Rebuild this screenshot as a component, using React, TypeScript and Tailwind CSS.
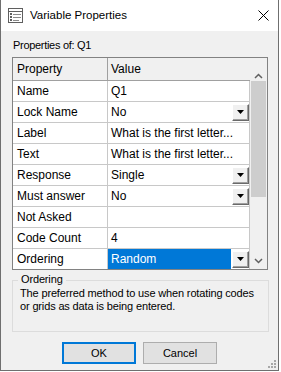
import React from "react";

type Row = { p: string; v: string; dd?: boolean; sel?: boolean };

const rows: Row[] = [
  { p: "Name", v: "Q1" },
  { p: "Lock Name", v: "No", dd: true },
  { p: "Label", v: "What is the first letter..." },
  { p: "Text", v: "What is the first letter..." },
  { p: "Response", v: "Single", dd: true },
  { p: "Must answer", v: "No", dd: true },
  { p: "Not Asked", v: "" },
  { p: "Code Count", v: "4" },
  { p: "Ordering", v: "Random", dd: true, sel: true },
];

function DropButton() {
  return (
    <div className="w-[17px] h-[17px] shrink-0 bg-[#f0f0f0] border-t border-l border-t-white border-l-white border-r border-b border-r-[#696969] border-b-[#696969] shadow-[inset_-1px_-1px_0_#a0a0a0] flex items-center justify-center">
      <svg width="7" height="4" viewBox="0 0 7 4">
        <polygon points="0,0 7,0 3.5,4" fill="#000" />
      </svg>
    </div>
  );
}

function Chevron({ up }: { up?: boolean }) {
  return (
    <svg width="9" height="6" viewBox="0 0 9 6">
      <polyline
        points={up ? "1,5 4.5,1.5 8,5" : "1,1 4.5,4.5 8,1"}
        fill="none"
        stroke="#606060"
        strokeWidth="1.5"
      />
    </svg>
  );
}

export default function App() {
  return (
    <div className="w-[281px] h-[372px] bg-white">
      <div className="relative flex h-[371px] w-[279px] flex-col border-x border-b border-[#6f6f6f] bg-[#f0f0f0] font-['Liberation_Sans',Arial,sans-serif] text-black">
        {/* Title bar */}
        <div className="flex h-[31px] shrink-0 items-center bg-white">
          <svg className="ml-[7px] shrink-0" width="15" height="15" viewBox="0 0 15 15">
            <rect x="0.5" y="0.5" width="14" height="14" fill="#fff" stroke="#5f5f5f" />
            <line x1="0.5" y1="3.5" x2="14.5" y2="3.5" stroke="#5f5f5f" />
            <rect x="2" y="5" width="2" height="2" fill="#5f5f5f" />
            <rect x="2" y="8" width="2" height="2" fill="#5f5f5f" />
            <rect x="2" y="11" width="2" height="2" fill="#5f5f5f" />
            <line x1="5" y1="6.5" x2="13" y2="6.5" stroke="#8a8a8a" />
            <line x1="5" y1="9.5" x2="13" y2="9.5" stroke="#8a8a8a" />
            <line x1="5" y1="12.5" x2="11" y2="12.5" stroke="#8a8a8a" />
          </svg>
          <span className="ml-[7px] text-[11.5px] leading-[15px]">Variable Properties</span>
          <svg className="ml-auto mr-[9px] shrink-0" width="11" height="11" viewBox="0 0 11 11">
            <line x1="0.5" y1="0.5" x2="10.5" y2="10.5" stroke="#000" strokeWidth="1" />
            <line x1="10.5" y1="0.5" x2="0.5" y2="10.5" stroke="#000" strokeWidth="1" />
          </svg>
        </div>

        {/* Body */}
        <div className="flex flex-col pl-[11px]">
          <div className="h-[26px] pl-[1px] pt-[7px] text-[11px] leading-[15px] tracking-[-0.3px]">
            Properties of: Q1
          </div>

          {/* Property grid */}
          <div className="flex h-[213px] w-[256px] overflow-hidden border border-[#828282] bg-white">
            <div className="flex w-[237px] flex-col text-[12px]">
              <div className="flex h-[23px] shrink-0 border-b border-[#a0a0a0] bg-[#f0f0f0]">
                <div className="flex w-[95px] items-center border-r border-[#a0a0a0] pl-[4px]">Property</div>
                <div className="flex w-[142px] items-center pl-[3px]">Value</div>
              </div>
              {rows.map((r) => (
                <div key={r.p} className="flex h-[21px] shrink-0 border-b border-[#c8c8c8]">
                  <div className="flex w-[95px] items-center border-r border-[#c8c8c8] pl-[4px]">{r.p}</div>
                  <div className="flex w-[142px] items-center border-r border-[#c8c8c8]">
                    {r.sel ? (
                      <div className="flex h-full w-[123px] items-center bg-[#0078d7] pl-[3px] text-white">{r.v}</div>
                    ) : r.dd ? (
                      <div className="w-[123px] whitespace-nowrap pl-[3px]">{r.v}</div>
                    ) : (
                      <div className="flex-1 whitespace-nowrap pl-[3px]">{r.v}</div>
                    )}
                    {r.dd ? (
                      <div className="ml-[1px]">
                        <DropButton />
                      </div>
                    ) : null}
                  </div>
                </div>
              ))}
            </div>
            {/* Scrollbar */}
            <div className="flex w-[17px] flex-col bg-[#f0f0f0]">
              <div className="flex h-[23px] items-end justify-center pb-[2px]">
                <Chevron up />
              </div>
              <div className="mx-[1px] h-[116px] bg-[#cdcdcd]" />
              <div className="h-[55px]" />
              <div className="flex h-[17px] items-center justify-center">
                <Chevron />
              </div>
            </div>
          </div>

          {/* Description group */}
          <div className="relative mt-[10px] h-[52px] w-[257px] border border-[#dcdcdc] pl-[7px] pt-[6px] text-[11px] leading-[13px] tracking-[-0.15px]">
            <span className="absolute left-[5px] top-[-8px] bg-[#f0f0f0] px-[3px] leading-[13px]">Ordering</span>
            <div>The preferred method to use when rotating codes</div>
            <div>or grids as data is being entered.</div>
          </div>

          {/* Buttons */}
          <div className="ml-[50px] mt-[10px] flex gap-[7px] text-[11px]">
            <button className="flex h-[22px] w-[74px] items-center justify-center border-2 border-[#0078d7] bg-[#e1e1e1]">
              OK
            </button>
            <button className="flex h-[22px] w-[74px] items-center justify-center border border-[#adadad] bg-[#e1e1e1]">
              Cancel
            </button>
          </div>
        </div>

        {/* Size grip */}
        <svg className="absolute bottom-[2px] right-[2px]" width="8" height="8" viewBox="0 0 8 8">
          <rect x="6" y="0" width="2" height="2" fill="#a8a8a8" />
          <rect x="3" y="3" width="2" height="2" fill="#a8a8a8" />
          <rect x="6" y="3" width="2" height="2" fill="#a8a8a8" />
          <rect x="0" y="6" width="2" height="2" fill="#a8a8a8" />
          <rect x="3" y="6" width="2" height="2" fill="#a8a8a8" />
          <rect x="6" y="6" width="2" height="2" fill="#a8a8a8" />
        </svg>
      </div>
    </div>
  );
}
